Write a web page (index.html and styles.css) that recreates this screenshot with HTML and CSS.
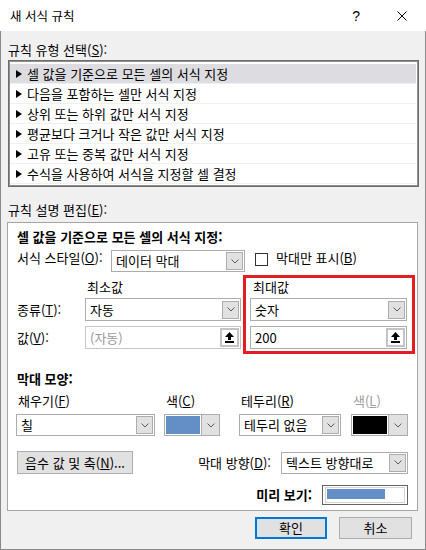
FILE: index.html
```html
<!DOCTYPE html>
<html lang="ko">
<head>
<meta charset="utf-8">
<title>새 서식 규칙</title>
<link rel="stylesheet" href="styles.css">
</head>
<body>
<div class="win">
  <div class="titlebar">
    <span class="title">새 서식 규칙</span>
    <span class="help">?</span>
    <svg class="close" viewBox="0 0 10 10"><path d="M0.5 0.5L9.5 9.5M9.5 0.5L0.5 9.5" stroke="#000" stroke-width="1"/></svg>
  </div>
  <div class="body">
    <div class="sec">규칙 유형 선택(<u>S</u>):</div>
    <ul class="list">
      <li class="sel"><svg class="tri" viewBox="0 0 6 8"><path d="M0 0L6 4L0 8Z"/></svg>셀 값을 기준으로 모든 셀의 서식 지정</li>
      <li><svg class="tri" viewBox="0 0 6 8"><path d="M0 0L6 4L0 8Z"/></svg>다음을 포함하는 셀만 서식 지정</li>
      <li><svg class="tri" viewBox="0 0 6 8"><path d="M0 0L6 4L0 8Z"/></svg>상위 또는 하위 값만 서식 지정</li>
      <li><svg class="tri" viewBox="0 0 6 8"><path d="M0 0L6 4L0 8Z"/></svg>평균보다 크거나 작은 값만 서식 지정</li>
      <li><svg class="tri" viewBox="0 0 6 8"><path d="M0 0L6 4L0 8Z"/></svg>고유 또는 중복 값만 서식 지정</li>
      <li><svg class="tri" viewBox="0 0 6 8"><path d="M0 0L6 4L0 8Z"/></svg>수식을 사용하여 서식을 지정할 셀 결정</li>
    </ul>
    <div class="sec sec2">규칙 설명 편집(<u>E</u>):</div>
    <div class="panel">
      <div class="hd">셀 값을 기준으로 모든 셀의 서식 지정:</div>
      <div class="row-style">
        <span class="lbl-style">서식 스타일(<u>O</u>):</span>
        <div class="combo c-style"><span class="cv">데이터 막대</span><span class="dd"><svg width="8" height="5" viewBox="0 0 8 5"><path d="M0.5 0.5L4 4L7.5 0.5" fill="none" stroke="#5a5a5a"/></svg></span></div>
        <span class="chk"></span>
        <span class="chk-lbl">막대만 표시(<u>B</u>)</span>
      </div>
      <div class="row-mm">
        <span class="mm-min">최소값</span>
        <span class="mm-max">최대값</span>
      </div>
      <div class="row-val r-type">
        <span class="rl">종류(<u>T</u>):</span>
        <div class="combo c-min"><span class="cv">자동</span><span class="dd"><svg width="8" height="5" viewBox="0 0 8 5"><path d="M0.5 0.5L4 4L7.5 0.5" fill="none" stroke="#5a5a5a"/></svg></span></div>
        <div class="combo c-max"><span class="cv">숫자</span><span class="dd"><svg width="8" height="5" viewBox="0 0 8 5"><path d="M0.5 0.5L4 4L7.5 0.5" fill="none" stroke="#5a5a5a"/></svg></span></div>
      </div>
      <div class="row-val r-value">
        <span class="rl">값(<u>V</u>):</span>
        <div class="combo c-min disabled"><span class="cv">(자동)</span><span class="up"><svg width="9" height="11" viewBox="0 0 9 11"><path d="M4.5 0L9 5H6V8H3V5H0Z"/><rect x="0" y="9" width="9" height="2"/></svg></span></div>
        <div class="combo c-max"><span class="cv">200</span><span class="up"><svg width="9" height="11" viewBox="0 0 9 11"><path d="M4.5 0L9 5H6V8H3V5H0Z"/><rect x="0" y="9" width="9" height="2"/></svg></span></div>
      </div>
      <div class="hd hd2">막대 모양:</div>
      <div class="row-bar">
        <div class="col col-fill">
          <span class="cl">채우기(<u>F</u>)</span>
          <div class="combo"><span class="cv">칠</span><span class="dd"><svg width="8" height="5" viewBox="0 0 8 5"><path d="M0.5 0.5L4 4L7.5 0.5" fill="none" stroke="#5a5a5a"/></svg></span></div>
        </div>
        <div class="col col-color">
          <span class="cl">색(<u>C</u>)</span>
          <div class="cpick"><span class="sw sw-blue"></span><span class="cdd"><svg width="8" height="5" viewBox="0 0 8 5"><path d="M0.5 0.5L4 4L7.5 0.5" fill="none" stroke="#5a5a5a"/></svg></span></div>
        </div>
        <div class="col col-border">
          <span class="cl">테두리(<u>R</u>)</span>
          <div class="combo"><span class="cv">테두리 없음</span><span class="dd"><svg width="8" height="5" viewBox="0 0 8 5"><path d="M0.5 0.5L4 4L7.5 0.5" fill="none" stroke="#5a5a5a"/></svg></span></div>
        </div>
        <div class="col col-bcolor">
          <span class="cl gray">색(<u>L</u>)</span>
          <div class="cpick"><span class="sw sw-black"></span><span class="cdd"><svg width="8" height="5" viewBox="0 0 8 5"><path d="M0.5 0.5L4 4L7.5 0.5" fill="none" stroke="#5a5a5a"/></svg></span></div>
        </div>
      </div>
      <div class="row-dir">
        <span class="btn btn-neg">음수 값 및 축(<u>N</u>)...</span>
        <span class="lbl-dir">막대 방향(<u>D</u>):</span>
        <div class="combo c-dir"><span class="cv">텍스트 방향대로</span><span class="dd"><svg width="8" height="5" viewBox="0 0 8 5"><path d="M0.5 0.5L4 4L7.5 0.5" fill="none" stroke="#5a5a5a"/></svg></span></div>
      </div>
      <div class="row-prev">
        <span class="lbl-prev">미리 보기:</span>
        <div class="preview"><div class="pv-in"><span class="pv-bar"></span></div></div>
      </div>
      <div class="highlight"></div>
    </div>
    <div class="buttons">
      <span class="btn btn-ok">확인</span>
      <span class="btn btn-cancel">취소</span>
    </div>
  </div>
</div>
</body>
</html>
```

FILE: styles.css
```css
* { box-sizing: border-box; }
html, body { margin: 0; padding: 0; }
body {
  width: 426px;
  height: 550px;
  overflow: hidden;
  background: #fff;
  color: #000;
  font-family: "Noto Sans CJK KR", "Noto Sans", sans-serif;
  font-size: 13px;
  line-height: 16px;
  letter-spacing: 0;
}
u { text-decoration: underline; text-underline-offset: 1px; }

.win { width: 426px; height: 550px; display: flex; flex-direction: column; }

.titlebar {
  flex: none;
  height: 31px;
  background: #fff;
  display: flex;
  align-items: center;
  padding: 0 19px 0 10px;
}
.title { flex: 1; font-size: 12.5px; }
.help {
  font-family: "Liberation Sans", sans-serif;
  font-size: 14px;
  margin-right: 37px;
}
.close { width: 10px; height: 10px; display: block; }

.body {
  flex: 1;
  background: #f0f0f0;
  border: 1px solid #8a8a8a;
  border-top: none;
  display: flex;
  flex-direction: column;
}

.sec { margin: 11px 0 0 7px; height: 16px; }
.sec2 { margin-top: 15px; }

.list {
  list-style: none;
  margin: 2px 0 0 7px;
  padding: 3px 2px 0 1px;
  width: 411px;
  height: 127px;
  background: #fff;
  border: 1px solid #6d6d6d;
  box-shadow: inset 0 0 0 1px #8f8f8f;
}
.list li {
  height: 20px;
  border-bottom: 1px solid #f0f0f0;
  display: flex;
  align-items: center;
  padding-left: 6px;
  line-height: 19px;
}
.list li.sel { background: #dddde1; }
.tri { width: 6px; height: 8px; margin-right: 5px; flex: none; fill: #000; }

.panel {
  position: relative;
  margin: 4px 0 0 6px;
  width: 411px;
  height: 289px;
  background: #fff;
  border: 1px solid #a5a5a5;
  padding: 6px 9px 0 9px;
}
.hd { font-weight: bold; height: 16px; }
.hd2 { margin-top: 22px; }

.combo {
  display: flex;
  align-items: center;
  background: #fff;
  border: 1px solid #adadad;
  height: 22px;
}
.cv { flex: 1; padding-left: 4px; white-space: nowrap; line-height: 18px; }
.dd {
  flex: none;
  width: 17px;
  height: 18px;
  margin-right: 1px;
  background: #e1e1e1;
  border: 1px solid #adadad;
  display: flex;
  align-items: center;
  justify-content: center;
}
.up {
  flex: none;
  width: 19px;
  height: 19px;
  margin-right: 1px;
  background: #fff;
  border: 2px solid #c4c4c4;
  display: flex;
  align-items: center;
  justify-content: center;
  fill: #000;
}
.combo.disabled { border-color: #c6c6c6; }
.combo.disabled .cv { color: #9a9a9a; }

.row-style { display: flex; align-items: flex-start; margin-top: 5px; height: 22px; }
.lbl-style { width: 94px; flex: none; }
.c-style { width: 134px; }
.chk {
  width: 13px;
  height: 13px;
  margin: 3px 0 0 10px;
  border: 1px solid #333;
  background: #fff;
  flex: none;
}
.chk-lbl { margin-left: 8px; }

.row-mm { display: flex; margin-top: 7px; height: 16px; padding-left: 70px; }
.mm-min { width: 166px; }

.row-val { display: flex; align-items: center; height: 23px; }
.r-type { margin-top: 3px; }
.r-value { margin-top: 5px; }
.rl { width: 68px; flex: none; }
.row-val .combo { height: 23px; }
.c-min { width: 156px; }
.c-max { width: 157px; margin-left: 9px; }

.row-bar { display: flex; margin-top: 6px; }
.col { display: flex; flex-direction: column; flex: none; }
.cl { height: 16px; padding-left: 2px; white-space: nowrap; }
.cl.gray { color: #a0a0a0; }
.col .combo, .col .cpick { margin-top: 5px; height: 22px; }
.col-fill { width: 139px; margin-left: -1px; }
.col-color { width: 56px; margin-left: 9px; }
.col-border { width: 102px; margin-left: 19px; }
.col-bcolor { width: 57px; margin-left: 10px; }

.cpick {
  display: flex;
  background: #fff;
  border: 1px solid #adadad;
  padding: 1px 0 1px 1px;
}
.sw { width: 34px; flex: none; }
.sw-blue { background: #638ec6; }
.sw-black { background: #000; }
.cdd {
  flex: 1;
  margin: -1px 0 -1px 1px;
  background: #e1e1e1;
  border-left: 1px solid #adadad;
  display: flex;
  align-items: center;
  justify-content: center;
}

.btn {
  display: flex;
  align-items: center;
  justify-content: center;
  background: #e1e1e1;
  border: 1px solid #adadad;
  white-space: nowrap;
}
.row-dir { display: flex; align-items: center; margin-top: 15px; height: 23px; }
.btn-neg { width: 116px; height: 23px; }
.lbl-dir { margin-left: auto; }
.c-dir { width: 127px; margin-left: 10px; }

.row-prev { display: flex; justify-content: flex-end; align-items: center; margin-top: 11px; height: 20px; }
.lbl-prev { font-weight: bold; }
.preview {
  width: 86px;
  height: 20px;
  margin-left: 10px;
  border: 1px solid #646464;
  padding: 1px 2px;
}
.pv-in {
  height: 100%;
  border: 1px solid #d4d4d4;
  background: #fff;
  padding: 1px 0 0 1px;
}
.pv-bar { display: block; width: 58px; height: 10px; background: #638ec6; }

.highlight {
  position: absolute;
  left: 235px;
  top: 52px;
  width: 172px;
  height: 79px;
  border: 3px solid #e51c23;
  pointer-events: none;
}

.buttons {
  display: flex;
  justify-content: flex-end;
  gap: 12px;
  margin-top: 6px;
  padding-right: 13px;
}
.btn-ok { width: 72px; height: 22px; border: 2px solid #0078d7; }
.btn-cancel { width: 73px; height: 22px; }
```
